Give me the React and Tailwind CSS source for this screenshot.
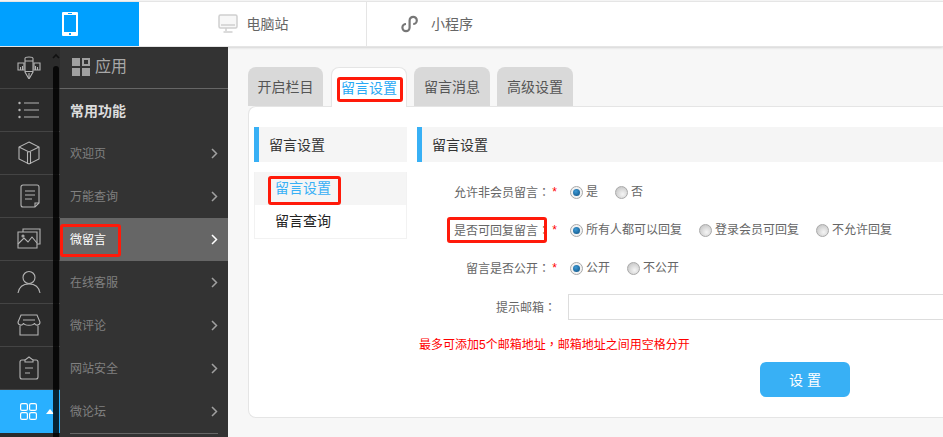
import React from "react";

// 左侧图标栏
const RailIcon = ({ children, w = 24, h = 24 }) => (
  <svg width={w} height={h} viewBox="0 0 24 24" fill="none" stroke="#b4b4b4" strokeWidth="1.1">
    {children}
  </svg>
);

const railItems = [
  <RailIcon key="ruler">
    <path d="M1 8h6v7H1zM17 8h6v7h-6z" />
    <path d="M3.500 12v3M5.500 11v4M18.500 11v4M20.500 12v3" />
    <path d="M8 3.500c0-2 8-2 8 0V17l-4 7-4-7z" />
    <path d="M8 6h8M8 16.500h8M12 18v5" />
  </RailIcon>,
  <RailIcon key="list">
    <path d="M7 5h15M7 12h15M7 19h15" />
    <circle cx="2.500" cy="5" r="1.200" fill="#b4b4b4" stroke="none" />
    <circle cx="2.500" cy="12" r="1.200" fill="#b4b4b4" stroke="none" />
    <circle cx="2.500" cy="19" r="1.200" fill="#b4b4b4" stroke="none" />
  </RailIcon>,
  <RailIcon key="cube">
    <path d="M12 1l10 5v12l-10 5-10-5V6z" />
    <path d="M2 6l10 5 10-5M10.500 11v12M13.500 11v12" />
  </RailIcon>,
  <RailIcon key="doc">
    <path d="M6 1h14a2 2 0 0 1 2 2v16l-4 4H6a2 2 0 0 1-2-2V3a2 2 0 0 1 2-2z" />
    <path d="M8 7h10M8 11h10M8 15h7M18 23v-4h4" />
  </RailIcon>,
  <RailIcon key="image">
    <path d="M6 5V2h17v15h-3" />
    <path d="M1 5h19v16H1z" />
    <path d="M1 17l6-6 4 4 4-5 5 6" />
    <circle cx="6" cy="9" r="1" />
  </RailIcon>,
  <RailIcon key="user">
    <circle cx="12" cy="7.500" r="6" />
    <path d="M1 23c1-6 5-9 11-9s10 3 11 9" />
  </RailIcon>,
  <RailIcon key="store">
    <path d="M4 2h16l3 7c0 4-5 4-5.500 1-.5 3-10.500 3-11 0C6 13 1 13 1 9z" />
    <path d="M6 7h12M3 13v9h18v-9" />
  </RailIcon>,
  <RailIcon key="clip">
    <path d="M8 4H5a2 2 0 0 0-2 2v15a2 2 0 0 0 2 2h14a2 2 0 0 0 2-2V6a2 2 0 0 0-2-2h-3" />
    <path d="M8 6V4l4-3 4 3v2zM8 12h8M8 17h5" />
  </RailIcon>,
];

const menu = [
  { label: "欢迎页" },
  { label: "万能查询" },
  { label: "微留言", active: true },
  { label: "在线客服" },
  { label: "微评论" },
  { label: "网站安全" },
  { label: "微论坛" },
];

const Chevron = ({ color }) => (
  <svg width="7" height="11" viewBox="0 0 7 11" fill="none" stroke={color} strokeWidth="1.5">
    <path d="M1 1l4.500 4.500L1 10" />
  </svg>
);

const Radio = ({ checked, label }) => (
  <span className="flex items-center mr-[17px]">
    {checked ? (
      <span className="w-[13px] h-[13px] rounded-full border border-[#a9a9a9] bg-[#f2f2f2] flex items-center justify-center">
        <span className="w-[7px] h-[7px] rounded-full bg-[radial-gradient(circle_at_40%_35%,#3d9ad6,#0d4f80)]" />
      </span>
    ) : (
      <span className="w-[13px] h-[13px] rounded-full border border-[#a9a9a9] bg-[radial-gradient(circle_at_60%_65%,#f5f5f5,#bdbdbd)]" />
    )}
    <span className="ml-[3px] text-xs text-[#666]">{label}</span>
  </span>
);

// 全角标点居中
const Punct = ({ children }) => <span className="font-['Noto_Sans_CJK_TC',sans-serif]">{children}</span>;

const Star = () => <span className="text-[#f00] w-[7px] text-right">*</span>;

const FormRow = ({ label, boxed, options }) => (
  <div className="h-[38px] flex items-center">
    <div className="w-[140px] flex justify-end items-center text-xs text-[#666]">
      {boxed ? (
        <span className="relative">
          {label}
          <Punct>：</Punct>
          <span className="absolute -left-[7px] right-[3px] -top-[5px] -bottom-[4px] border-[3px] border-[#ff1a0a] rounded-[3px]" />
        </span>
      ) : (
        <span>
          {label}
          <Punct>：</Punct>
        </span>
      )}
      <Star />
    </div>
    <div className="flex items-center ml-[13px]">
      {options.map((o, i) => (
        <Radio key={o} label={o} checked={i === 0} />
      ))}
    </div>
  </div>
);

export default function App() {
  return (
    <div className="w-[943px] h-[437px] overflow-hidden flex flex-col bg-[#f7f7f7] font-['Liberation_Sans','Noto_Sans_CJK_SC',sans-serif]">
      {/* 顶部 */}
      <div className="h-[44px] mt-[2px] shrink-0 flex bg-white shadow-[0_0_0_1px_#e5e5e5,0_1px_3px_rgba(0,0,0,0.25)] relative z-10">
        <div className="w-[139px] bg-[#00a0ff] flex items-center justify-center">
          <svg width="16" height="24" viewBox="0 0 16 24">
            <path
              fill="#fff"
              fillRule="evenodd"
              d="M1 0h14a1 1 0 0 1 1 1v22a1 1 0 0 1-1 1H1a1 1 0 0 1-1-1V1a1 1 0 0 1 1-1zM2 3v17h12V3zM6 1v1h4V1zM7 21v2h2v-2z"
            />
          </svg>
        </div>
        <div className="w-[228px] flex items-center justify-center gap-[9px] border-r border-[#e5e5e5] pl-[1px]">
          <svg width="20" height="20" viewBox="0 0 20 20" fill="none" stroke="#cfcfcf" strokeWidth="1.500">
            <rect x="1" y="1" width="18" height="13" rx="1.500" fill="#f7f7f7" />
            <path d="M3 11h14M8 14v3M5.500 18h9" />
          </svg>
          <span className="text-sm text-[#666]">电脑站</span>
        </div>
        <div className="w-[140px] flex items-center justify-center gap-[12px]">
          <svg width="18" height="18" viewBox="0 0 18 18" fill="none" stroke="#777" strokeWidth="2.200">
            <path d="M5 9a3.600 3.600 0 1 0 3.600 3.600V5.400A3.600 3.600 0 1 1 12.200 9" />
          </svg>
          <span className="text-sm text-[#666]">小程序</span>
        </div>
      </div>

      <div className="flex-1 flex min-h-0">
        {/* 图标栏 */}
        <div className="w-[60px] shrink-0 bg-[#2b2b2b] relative">
          {railItems.map((icon, i) => (
            <div key={i} className="h-[43px] flex items-center justify-center border-b border-[#444] pr-[3px]">
              {icon}
            </div>
          ))}
          <div className="h-[43px] bg-[#29b0ff] flex items-center pl-[20px] gap-[9px]">
            <svg width="17" height="17" viewBox="0 0 17 17" fill="none" stroke="#fff" strokeWidth="1.200">
              <rect x="0.600" y="0.600" width="6.800" height="6.800" rx="1.500" />
              <rect x="9.600" y="0.600" width="6.800" height="6.800" rx="1.500" />
              <rect x="0.600" y="9.600" width="6.800" height="6.800" rx="1.500" />
              <rect x="9.600" y="9.600" width="6.800" height="6.800" rx="1.500" />
            </svg>
            <span className="w-0 h-0 border-x-[4px] border-x-transparent border-b-[5px] border-b-white" />
          </div>
          {/* 滚动条 */}
          <div className="absolute left-[53px] top-[20px] bottom-0 w-[6px] bg-black/80 rounded-t-sm" />
          <svg className="absolute left-[52px] top-[7px]" width="8" height="6" viewBox="0 0 8 6" fill="none" stroke="#111" strokeWidth="1.600">
            <path d="M1 5l3-3 3 3" />
          </svg>
        </div>

        {/* 二级菜单 */}
        <div className="w-[168px] shrink-0 bg-[#333]">
          <div className="h-[43px] flex items-center pl-[12px] border-b border-[#666]">
            <svg width="18" height="18" viewBox="0 0 18 18" fill="#a0a0a0">
              <path d="M0 0h8v8H0zM0 10h8v8H0zM10 10h8v8h-8z" />
              <path fillRule="evenodd" d="M10 0h8v8h-8zM12 2v4h4V2z" />
            </svg>
            <span className="ml-[5px] text-base text-[#a8a8a8]">应用</span>
          </div>
          <div className="h-[43px] flex items-center pl-[10px] text-sm font-bold text-[#dcdcdc]">常用功能</div>
          {menu.map((m) => (
            <div
              key={m.label}
              className={
                m.active
                  ? "h-[43px] flex items-center justify-between pl-[10px] pr-[10px] text-xs text-white bg-[#666]"
                  : "h-[43px] flex items-center justify-between pl-[10px] pr-[10px] text-xs text-[#808080]"
              }
            >
              {m.active ? (
                <span className="relative">
                  {m.label}
                  <span className="absolute -left-[10px] -right-[15px] -top-[8px] -bottom-[9px] border-[3px] border-[#ff1a0a] rounded-[3px]" />
                </span>
              ) : (
                <span>{m.label}</span>
              )}
              <Chevron color={m.active ? "#fff" : "#a0a0a0"} />
            </div>
          ))}
          <div className="mx-[10px] border-t border-[#666]" />
        </div>

        {/* 内容 */}
        <div className="flex-1 min-w-0 pl-[20px] pt-[21px]">
          <div className="flex gap-[7px] relative z-10 h-[39px] text-sm">
            <div className="w-[75px] mr-[1px] h-[39px] bg-[#d9d9d9] rounded-t-lg flex items-center justify-center text-[#555]">开启栏目</div>
            <div className="w-[76px] h-[40px] bg-white border border-b-0 border-[#e5e5e5] rounded-t-lg flex items-center justify-center text-[#29a9f5]">
              <span className="relative">
                留言设置
                <span className="absolute -left-[4px] -right-[6px] -top-[1px] -bottom-[4px] border-[3px] border-[#ff1a0a] rounded-[3px]" />
              </span>
            </div>
            <div className="w-[76px] h-[39px] bg-[#d9d9d9] rounded-t-lg flex items-center justify-center text-[#555]">留言消息</div>
            <div className="w-[76px] h-[39px] bg-[#d9d9d9] rounded-t-lg flex items-center justify-center text-[#555]">高级设置</div>
          </div>

          <div className="h-[312px] bg-white border border-r-0 border-[#e5e5e5] rounded-l-lg pl-[5px] pt-[20px] flex">
            <div className="w-[153px] shrink-0">
              <div className="h-[35px] bg-[#f5f5f5] border-l-[5px] border-[#38b0f5] flex items-center pl-[10px] text-sm text-[#333]">留言设置</div>
              <div className="mt-[10px] border border-t-0 border-[#f2f2f2] text-sm">
                <div className="h-[33px] pb-[1px] bg-[#f5f5f5] flex items-center pl-[20px] text-[#38b0f5]">
                  <span className="relative">
                    留言设置
                    <span className="absolute -left-[7px] -right-[10px] -top-[2px] -bottom-[7px] border-[3px] border-[#ff1a0a] rounded-[3px]" />
                  </span>
                </div>
                <div className="h-[33px] pb-[1px] flex items-center pl-[20px] text-[#222]">留言查询</div>
              </div>
            </div>

            <div className="flex-1 min-w-0 ml-[10px]">
              <div className="h-[35px] bg-[#f5f5f5] border-l-[5px] border-[#38b0f5] flex items-center pl-[10px] text-sm text-[#333]">留言设置</div>
              <div className="mt-[11px]">
                <FormRow label="允许非会员留言" options={["是", "否"]} />
                <FormRow label="是否可回复留言" boxed options={["所有人都可以回复", "登录会员可回复", "不允许回复"]} />
                <FormRow label="留言是否公开" options={["公开", "不公开"]} />
              </div>
              <div className="mt-[7px] flex items-center">
                <div className="w-[139px] text-right text-xs text-[#666]">
                  提示邮箱<Punct>：</Punct>
                </div>
                <div className="flex-1 ml-[12px] h-[26px] border border-r-0 border-[#ddd]" />
              </div>
              <p className="mt-[16px] ml-[2px] text-xs leading-[16px] text-[#f00]">
                最多可添加5个邮箱地址<Punct>，</Punct>邮箱地址之间用空格分开
              </p>
              <button className="block mt-[9px] ml-[343px] w-[90px] h-[35px] rounded-md bg-[#38b0f5] text-sm text-white">设 置</button>
            </div>
          </div>
        </div>
      </div>
    </div>
  );
}
